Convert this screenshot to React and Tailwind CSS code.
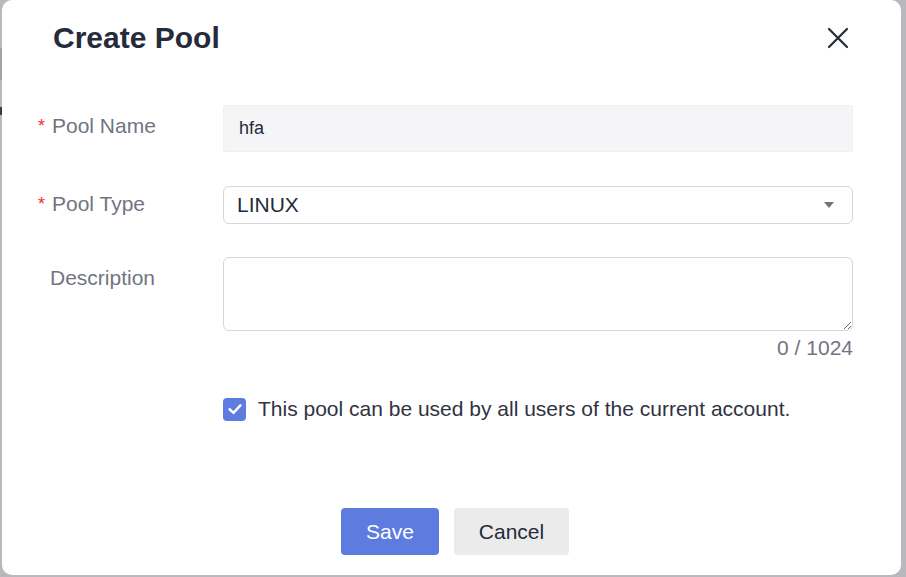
export default function App() {
  const font = { fontFamily: '"Liberation Sans", Arial, sans-serif' };
  return (
    <div className="relative w-[906px] h-[577px] bg-[#b9b9bd] overflow-hidden" style={font}>
      <span className="absolute left-0 top-[48px] w-[2px] h-[32px] bg-[#a2a2a8]" />
      <span className="absolute left-0 top-[107px] w-[2px] h-[8px] bg-[#3a3d45]" />
      <div className="ml-[2px] w-[899px] h-[575px] bg-white rounded-[10px] flex flex-col">
        <div className="h-[76px] flex items-center justify-between pl-[51px] pr-[51px]">
          <h1 className="text-[30px] leading-[36px] font-bold text-[#252b3a]">Create Pool</h1>
          <svg width="24" height="24" viewBox="0 0 24 24" className="text-[#252b3a]">
            <path d="M3 3 L21 21 M21 3 L3 21" stroke="currentColor" strokeWidth="2.2" strokeLinecap="round" fill="none" />
          </svg>
        </div>

        <div className="pt-[29px] flex flex-col">
          <div className="flex items-start">
            <div className="w-[221px] pl-[36px] pt-[9px] flex items-center text-[21px] leading-[24px] text-[#71757f]">
              <span className="w-[14px] text-[#f0302c] text-[18px] leading-none">*</span>
              <span>Pool Name</span>
            </div>
            <input
              readOnly
              defaultValue="hfa"
              className="w-[630px] h-[47px] bg-[#f5f5f7] border border-[#f0f0f3] rounded-[2px] pl-[15px] text-[18px] text-[#252b3a] outline-none"
              style={font}
            />
          </div>

          <div className="flex items-start mt-[34px]">
            <div className="w-[221px] pl-[36px] pt-[6px] flex items-center text-[21px] leading-[24px] text-[#71757f]">
              <span className="w-[14px] text-[#f0302c] text-[18px] leading-none">*</span>
              <span>Pool Type</span>
            </div>
            <div className="w-[630px] h-[38px] border border-[#d6d7db] rounded-[6px] pl-[13px] pr-[18px] flex items-center justify-between">
              <span className="text-[21px] text-[#252b3a]">LINUX</span>
              <svg width="10" height="6" viewBox="0 0 10 6">
                <path d="M0 0 L10 0 L5 6 Z" fill="#71757f" />
              </svg>
            </div>
          </div>

          <div className="flex items-start mt-[33px]">
            <div className="w-[221px] pl-[36px] pt-[9px] flex items-center text-[21px] leading-[24px] text-[#71757f]">
              <span className="w-[12px]"></span>
              <span>Description</span>
            </div>
            <div className="flex flex-col items-end">
              <textarea
                className="w-[630px] h-[74px] border border-[#d6d7db] rounded-[6px] outline-none px-[13px] py-[6px] text-[18px]"
                style={font}
              />
              <div className="mt-[5px] h-[24px] leading-[24px] text-[21px] text-[#71757f]">0 / 1024</div>
            </div>
          </div>

          <div className="flex items-center mt-[37px] pl-[221px]">
            <span className="w-[23px] h-[23px] rounded-[4px] bg-[#5e7ce0] flex items-center justify-center">
              <svg width="18" height="18" viewBox="0 0 16 16">
                <path d="M3.2 8.2 L6.6 11.4 L12.8 4.8" stroke="white" strokeWidth="2.2" fill="none" strokeLinecap="round" strokeLinejoin="round" />
              </svg>
            </span>
            <span className="ml-[12px] text-[21px] leading-[24px] text-[#303340]">
              This pool can be used by all users of the current account.
            </span>
          </div>

          <div className="flex justify-center gap-[15px] mt-[87px] pl-[7px]">
            <button className="w-[98px] h-[47px] rounded-[4px] bg-[#5e7ce0] text-white text-[21px]" style={font}>
              Save
            </button>
            <button className="w-[115px] h-[47px] rounded-[4px] bg-[#ebebeb] text-[#252b3a] text-[21px]" style={font}>
              Cancel
            </button>
          </div>
        </div>
      </div>
    </div>
  );
}
